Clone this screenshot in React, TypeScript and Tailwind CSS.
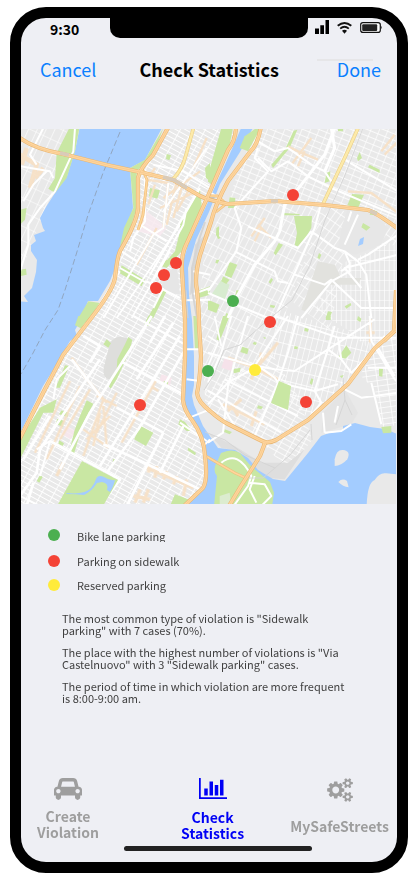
import React from "react";

type Dot = { x: number; y: number; color: string };

const GREEN = "#4caf50";
const RED = "#f44336";
const YELLOW = "#ffeb3b";

const dots: Dot[] = [
  { x: 293, y: 195, color: RED },
  { x: 176, y: 263, color: RED },
  { x: 164, y: 275, color: RED },
  { x: 156, y: 288, color: RED },
  { x: 233, y: 301, color: GREEN },
  { x: 270, y: 322, color: RED },
  { x: 208, y: 371, color: GREEN },
  { x: 255, y: 370, color: YELLOW },
  { x: 306, y: 402, color: RED },
  { x: 140, y: 405, color: RED },
];

const highways = [
  "M15 134C28 146 45 151 63 154L107 165L140 172L173 180L200 196Q208 200 228 204L275 201L325 205L368 210Q375 212 397 228",
  "M169 126L153 155Q140 168 138 178L138 208Q137 222 120 251Q117 258 115 278Q113 290 92 317L63 355L43 393L17 444",
  "M236 126Q236 140 228 150L208 196L186 245Q181 255 182 271L185 320V356L183 400Q184 410 192 420Q204 436 205 456Q208 480 203 488L184 506",
  "M261 126Q258 145 250 152L228 181Q215 205 211 222L200 255Q194 278 197 290Q199 310 199 325L201 356Q200 380 197 393Q198 402 210 411Q220 420 228 424L262 441Q268 444 276 440L308 420L348 384L375 348L397 329",
  "M396 290L394 331L384 341",
  "M265 443L260 456L241 486L229 506",
];

const ramps = [
  "M142 168L147 180L143 215L138 230",
  "M204 455L235 473L248 479",
  "M208 196L218 196L226 204L216 212",
];

function Tile({ x, y, children }: { x: number; y: number; children: React.ReactNode }) {
  return <g transform={`translate(${x} ${y}) scale(0.33333)`}>{children}</g>;
}

function StreetGrid({ id, w, h, angle, stroke }: { id: string; w: number; h: number; angle: number; stroke: number }) {
  return (
    <pattern id={id} width={w} height={h} patternUnits="userSpaceOnUse" patternTransform={`rotate(${angle})`}>
      <path d={`M0 0H${w}M0 0V${h}`} stroke="#fff" strokeWidth={stroke} fill="none" />
    </pattern>
  );
}

function CityMap() {
  return (
    <svg
      viewBox="21 129 375 375"
      preserveAspectRatio="xMidYMid slice"
      className="block aspect-square w-full"
      role="img"
      aria-label="Map of reported violations"
    >
      <defs>
        <StreetGrid id="manhattan" w={11} h={4.6} angle={29} stroke={1.7} />
        <StreetGrid id="jersey" w={8} h={13} angle={25} stroke={1.2} />
        <StreetGrid id="bronxWest" w={6} h={11} angle={27} stroke={1.3} />
        <StreetGrid id="bronxEast" w={5.5} h={12} angle={14} stroke={1.3} />
        <StreetGrid id="bronxSide" w={6} h={10} angle={35} stroke={1.3} />
        <StreetGrid id="bronxTop" w={8} h={6} angle={22} stroke={1.3} />
        <StreetGrid id="bronxFar" w={4.8} h={10} angle={0} stroke={1.2} />
        <StreetGrid id="south" w={10} h={5} angle={29} stroke={1.5} />
        <StreetGrid id="point" w={10} h={5.5} angle={-8} stroke={1.5} />
      </defs>

      <rect x="15" y="120" width="390" height="390" fill="#e9e9e9" />

      {/* street grids */}
      <path d="M15 120H82L55 190L35 235L15 290Z" fill="url(#jersey)" />
      <path d="M170 126L236 126L226 160L206 200L184 245L182 271L185 350L183 405L205 440L205 486L187 506H15V440L63 358L110 290L120 251L138 208V172Z" fill="url(#manhattan)" />
      <path d="M262 120H397V225L368 210L325 205L228 203L240 165Z" fill="url(#bronxTop)" />
      <path d="M228 204L325 205L312 240L290 300L270 360L205 400L200 300L205 240Z" fill="url(#bronxWest)" />
      <path d="M325 205L397 228V245L345 250L330 330L290 300L312 240Z" fill="url(#bronxSide)" />
      <path d="M345 262L397 240V330L370 350L348 330L315 310Z" fill="url(#bronxFar)" />
      <path d="M280 310L345 330L375 345L350 380L308 418L290 400L270 350Z" fill="url(#bronxEast)" />
      <path d="M205 392L270 350L300 400L312 440L288 470L265 446L205 410Z" fill="url(#south)" />
      <path d="M372 355L397 332V425L383 427L375 390L360 375Z" fill="url(#point)" />

      {/* areas with their own tint */}
      <Tile x={20} y={128}>
        <path d="M370 240L440 300L420 325L350 310Z" fill="#f7e9ee" opacity=".85" />
        <path d="M425 470L470 400L480 500L430 490Z" fill="#e6e6e6" />
        <path d="M525 350L555 320L520 500H508Z" fill="#dadada" />
      </Tile>
      <Tile x={20} y={316}>
        <path d="M270 80Q290 50 330 70L295 150L275 190Q240 190 255 140Z" fill="#dededc" />
        <path d="M425 175L455 185L450 210L415 200Z" fill="#f7e6ec" />
        <path d="M135 330L170 345L150 370L125 355Z" fill="#f7e6ec" opacity=".8" />
      </Tile>
      <Tile x={208} y={128}>
        <path d="M400 300L420 240L500 260L540 300L520 350L440 380L390 360Z" fill="#e7e7e7" />
        <path d="M330 400L380 410L400 450L460 450L450 470H360L290 550L280 545Z" fill="#e2e2de" />
        <path d="M40 455L65 470L50 515L10 500Z" fill="#d8ecd0" />
        <path d="M390 0H405V10H390Z" fill="#c9e7a3" />
      </Tile>
      <Tile x={208} y={316}>
        <path d="M50 125L75 135L70 165L40 155Z" fill="#f6e2ea" />
        <path d="M345 290L410 220L450 290L430 325L340 350Z" fill="#e4e4e4" />
        <path d="M0 350L80 390L160 440L240 440L290 400L230 490L170 485L90 405L40 395Z" fill="#dedede" />
      </Tile>

      {/* water */}
      <g fill="#a3ccff">
        <path d="M80 126L75 151L67 176L55 193L46 207L40 218L43 228L45 231L34 235L36 241L31 245L31 251L37 260L36 272L32 288L24 296L28 302L15 301V444L43 386L50 375L63 353L70 341L77 336L75 330L82 318L88 301L98 301L110 281L118 261L123 241L133 208L130 168L145 160L163 126Z" />
        <path d="M242 126H254L240 152L220 184L209 212L196 240L188 268L189 295L192 320L194 356L194 385L192 396L194 405L203 426L218 448L235 450L248 458L258 470L273 479L285 481L308 453L321 436L329 433L343 431V426L355 423L370 427L385 429L397 434V506H187L204 487L206 455L197 430L184 406L187 320L183 262L188 245L208 202L228 158Z" />
        <path d="M364 237L363 244L358 246L360 239Z" />
      </g>
      <path d="M221 453Q232 448 240 453L249 464L258 472L270 482L274 493L272 506H214L217 476Q212 470 217 462Z" fill="#c9e7a3" />
      <Tile x={208} y={316}>
        <g fill="#e9e9e9">
          <path d="M380 430Q385 400 405 402Q430 405 418 430Q400 450 380 450Z" />
          <path d="M391 498Q403 485 417 495L422 514Q405 512 391 498Z" />
          <path d="M476 570Q478 500 500 492Q515 468 535 472L570 475V570Z" />
        </g>
        <path d="M35 540L65 530L70 570H35Z" fill="#dceccf" />
      </Tile>

      {/* parks */}
      <g fill="#c9e7a3">
        <Tile x={20} y={128}>
          <path d="M148 0H178L165 70L140 150L105 195L85 182L105 150L110 75Z" />
          <path d="M430 0L400 80L350 130V240L325 320L300 355L312 300L340 240L330 120L375 95Z" />
          <path d="M390 180L420 187L412 212L387 205ZM440 78L453 82L448 97L438 93Z" />
          <path d="M540 185L545 230L515 330L485 375L480 330V280L510 235Z" />
          <path d="M480 310L485 370L440 420L425 415L465 370Z" />
          <path d="M437 395L448 400L440 413L431 408ZM305 412L375 455L365 475L298 435Z" />
          <path d="M430 485L440 490L400 570H383Z" />
          <path d="M205 520L240 525L210 570H175ZM0 245L20 240L15 275L0 290ZM0 425L18 422L20 440L0 445Z" />
          <path d="M555 120L570 105V160L558 150ZM530 490L570 475V500L535 510Z" />
        </Tile>
        <Tile x={208} y={128}>
          <path d="M40 0H75L65 50L10 170L0 160V140Z" />
          <path d="M145 0L158 0L120 70L95 60L110 25Z" />
          <path d="M257 8L268 5L245 60L195 120L190 110L232 62Z" />
          <path d="M355 135L367 130L365 160L350 165Z" />
          <path d="M455 72L462 90L450 100L447 90ZM485 110L515 125V135L480 118Z" />
          <path d="M432 198L468 200L450 240L418 232Z" />
          <path d="M258 264H312L310 300L290 335L272 356L260 352L267 315Z" />
          <path d="M228 255L275 258V262H228ZM465 285L487 298L475 308L460 298Z" />
          <path d="M25 300L33 295V325L38 330L30 333L24 320ZM212 345L225 350L203 382L197 375ZM333 375L340 380L335 393L328 390Z" />
          <path d="M65 402L88 410L70 450L50 442ZM45 445L65 455L55 468L40 460ZM25 395L35 395L28 407L22 404ZM85 487L95 487L93 500L82 500Z" />
          <path d="M190 450L195 455L187 468L182 462ZM187 530L202 533L198 540L186 538ZM0 515L35 530L25 555L0 545ZM360 550L372 552L365 570H353ZM410 535L428 525L430 532L415 542ZM55 555L68 560L65 570H50Z" />
          <path d="M65 208L82 210L80 240L60 240ZM490 245L508 250L505 262L485 260Z" />
        </Tile>
        <Tile x={20} y={316}>
          <path d="M175 0H215L185 38L165 28ZM385 0H398L385 30L373 25Z" />
          <path d="M325 63L337 72L325 115L290 190L272 218L267 212L290 160L292 130L315 85Z" />
          <path d="M260 70L273 82L265 95L250 85Z" />
          <path d="M200 253L220 263L190 320L162 413L148 408L163 345L180 300Z" />
          <path d="M362 330L400 350L378 390L342 370Z" />
          <path d="M280 428L288 432L285 440L278 438ZM60 477L68 483L58 500L50 495ZM118 373L132 382L128 390L115 384ZM125 283L145 290L143 303L117 295ZM112 308L133 315L128 332L107 324ZM135 148L148 150L120 215L107 215Z" />
          <path d="M465 535L510 552L490 570H450ZM480 310L495 318L515 345L500 345L475 325Z" />
          <path d="M432 195L445 198L442 208L430 205ZM0 370L60 275L110 250L100 290L70 290L0 430Z" />
          <path d="M520 0H530L535 100H525ZM505 395L528 410L525 418L503 403Z" />
        </Tile>
        <Tile x={208} y={316}>
          <path d="M45 0H65L35 75L25 70Z" />
          <path d="M103 92L122 98L118 115L97 108ZM290 35L302 38L300 47L289 45ZM260 90L270 92L268 100L258 98ZM138 77L147 80L143 87L134 84ZM165 62L174 65L171 70ZM75 160L98 155L95 168L78 172Z" />
          <path d="M415 88L430 110L412 128L392 122ZM310 187L316 190L312 207L305 202ZM395 180L407 177L402 187ZM513 155L525 158L523 182L513 180ZM520 333L550 330V350L525 352ZM355 0H368V12H353ZM150 268L165 272L160 280L147 277ZM50 340L72 348L65 355L48 348ZM450 0L460 8L457 18L447 12Z" />
        </Tile>
      </g>

      {/* commercial streets */}
      <g fill="none" stroke="#f8e0c4" strokeWidth="7" opacity=".9">
        <Tile x={20} y={128}>
          <path d="M0 80L50 110L30 180M20 60L5 110M70 120L45 150" strokeWidth="14" />
          <path d="M385 150L405 120M380 155L445 165M405 170L385 230M445 165L430 300M470 160L440 290M490 160L460 270M510 180L470 250M420 240L520 195M430 210L540 130M520 120L560 30M350 410L410 300M360 240L370 300" />
        </Tile>
        <Tile x={208} y={128}>
          <path d="M240 55L270 70L330 95M250 110L310 30M270 115L290 70M520 70L560 20M530 80L570 40M420 190L490 195L570 255M150 290L190 330M130 325L170 270M140 340L160 300" />
        </Tile>
        <Tile x={20} y={316}>
          <path d="M155 125L200 190L260 260M180 210L80 430M150 195L45 410M210 220L120 370M250 250L190 420M290 230L230 350M230 240L290 270M190 340L265 395M250 270L260 390M240 290L220 390M270 300L200 370" />
          <path d="M410 190L305 380M400 215L415 225" />
          <path d="M130 440L110 480M380 455L520 515M390 445L385 470M410 450L405 485M440 465L430 490M470 480L460 505M500 490L490 540M360 520L345 560M385 520L370 560M340 540L390 550" strokeWidth="10" />
        </Tile>
        <Tile x={208} y={316}>
          <path d="M60 125L140 155L210 190M150 150L210 80M160 110L150 160M130 190L150 140M45 265L170 325M60 285L100 250M90 300L70 265M130 330L145 285M487 10V80M475 50H500" strokeWidth="9" />
        </Tile>
      </g>

      {/* main streets */}
      <g fill="none" stroke="#fff" strokeWidth="6" strokeLinejoin="round">
        <Tile x={20} y={128}>
          <path d="M165 0L160 70L105 190L60 240L25 290V350L0 430M70 0L30 80L50 110M0 115L90 130L100 150M80 130L40 170L10 220" />
          <path d="M375 150V280L340 330L330 370M445 165L430 300L400 320L250 570M400 110L490 130L570 180M540 180L390 440M500 240L490 290L390 470M560 60L430 250M360 290L440 340M305 370L350 400M380 460L480 510M300 420L380 465" />
          <path d="M290 570L480 290M335 570L450 370M300 430L220 560" strokeWidth="5" />
          <path d="M495 517L570 515M430 480L400 540M515 500L570 480M520 430L570 440" />
        </Tile>
        <Tile x={208} y={128}>
          <path d="M380 0L350 80L280 170M280 170L230 230L215 310L200 340L140 410L90 500L60 570M370 0L380 60L350 130" strokeWidth="9" />
          <path d="M150 40L200 70L240 60L310 110L350 130L370 160M410 95L570 190M150 90L190 130L240 100L300 145M0 190L45 215M300 145L370 180L570 265M150 60L140 90L180 130L80 240L100 300L85 370L0 490" />
          <path d="M80 370L200 430L210 460L240 465M120 295L200 330L270 360L310 310M340 225L320 300L200 570M310 310L380 360L410 370L425 405V430L370 460L280 570M410 370L450 400L475 440L490 570M425 410L400 430M0 495L60 520L180 570M450 260L410 350M450 395L480 380L570 320M260 440L350 470L370 455L460 540H570M430 250L420 280M460 480L410 420L570 380" />
        </Tile>
        <Tile x={20} y={316}>
          <path d="M395 0L210 290L120 460M480 60L240 450M435 0L390 80M240 130L60 400L50 470L0 540M190 60L240 90L210 140M155 130L240 240M490 110L355 340L260 470M310 140L490 235M90 375L190 430M290 275L430 350M250 385L330 420L540 520M190 430L300 490L240 570M430 350L320 570M490 330L420 470M40 500L20 570M460 20L350 190M200 20L130 120M10 430L90 300" strokeWidth="8" />
          <path d="M500 100H540M500 190L540 195M495 310L570 280M550 390L570 370M480 320L560 375M340 0L495 85M150 150L110 190L100 250M50 400L90 375L60 480M0 540L60 570" />
        </Tile>
        <Tile x={208} y={316}>
          <path d="M0 110L120 145L200 160L260 165L360 100L500 10M70 0L40 110L0 200M120 0L100 70L60 210L45 350L0 380M0 265L60 200L150 150M150 150L200 185L210 200L320 225L390 205M270 0L240 110L210 200L140 360M140 150L240 0M360 100L400 130L430 170L480 120L530 60M320 225L360 100L380 30M200 0L390 65H570M390 65L400 130M485 0L490 75L560 190L570 200M480 155H570M410 220L460 245L570 230M490 200L520 325M510 95L560 180M320 225L340 260L300 310M0 225L220 350M50 190L270 300M30 250L80 330M345 290L350 350M350 350L400 345L430 325M390 270L380 320" />
          <path d="M40 440Q90 400 130 480L120 510L80 566M125 500L170 505L190 540L160 570M140 480L125 520L145 560" />
          <path d="M0 60L30 80L0 150M20 0L40 90" strokeWidth="5" />
        </Tile>
      </g>

      {/* large parks, not crossed by streets */}
      <path d="M82 461L118 480L103 506H57ZM279 381L291 386L288 410L271 403Z" fill="#c9e7a3" />
      <path d="M66 493Q85 495 91 488Q95 483 96 479Q98 474 104 477Q110 481 115 480Q113 488 110 492L107 490Q109 483 102 482L97 483Q92 491 84 495Q76 494 67 494Z" fill="#a3ccff" />

      {/* railways and ferry route */}
      <g fill="none" stroke="#d4d4d4" strokeWidth=".9">
        <path d="M363 128L345 175L325 220L310 265L292 300L262 325L240 345L224 350L214 375L204 390" />
        <path d="M310 430L290 455L275 468L263 478L248 478M275 468L245 455L225 440L205 432M311 424L312 440M343 378L345 400L336 425M345 400L352 415" />
        <path d="M205 222L199 240L192 268V290L197 318M209 224L202 245L195 268" strokeWidth="2" />
        <path d="M40 400L21 435M186 290L188 318" />
      </g>
      <path d="M120 132L103 173L88 215L76 255L65 290L58 310L45 330L32 355L21 374" fill="none" stroke="#8fa1b9" strokeWidth=".9" strokeDasharray="6 3" />

      {/* secondary roads */}
      <g fill="none">
        <path d="M194 126L186 155Q182 170 173 179M359 126L346 155L323 204" stroke="#e9cf88" strokeWidth="3.6" />
        <path d="M194 126L186 155Q182 170 173 179M359 126L346 155L323 204" stroke="#fdeaa9" strokeWidth="2.4" />
      </g>

      {/* highways */}
      <g fill="none" strokeLinejoin="round">
        {ramps.map((d) => (
          <path key={d} d={d} stroke="#efbf7c" strokeWidth="2.8" />
        ))}
        {ramps.map((d) => (
          <path key={d + "fill"} d={d} stroke="#ffd69b" strokeWidth="1.5" />
        ))}
        {highways.map((d) => (
          <path key={d} d={d} stroke="#e8b673" strokeWidth="4.2" />
        ))}
        {highways.map((d) => (
          <path key={d + "fill"} d={d} stroke="#ffd59d" strokeWidth="3" />
        ))}
        {highways.map((d) => (
          <path key={d + "line"} d={d} stroke="#f3c689" strokeWidth=".6" />
        ))}
        <path d="M60 153L69 155M163 177L174 180L187 188M271 201H278M370 211L377 214" stroke="#d9cbb9" strokeWidth="3.6" />
      </g>

      {dots.map((d) => (
        <circle key={`${d.x}-${d.y}`} cx={d.x} cy={d.y} r="6" fill={d.color} />
      ))}
    </svg>
  );
}

function StatusIcons() {
  return (
    <div className="flex gap-2 pt-0.5">
      <svg width="14" height="14" viewBox="0 0 14 14" aria-hidden="true">
        <path d="M0 8.5H4V14H0ZM5.3 5.3H9V14H5.3ZM10.5 0H14V14H10.5Z" fill="#000" />
      </svg>
      <svg width="15" height="14" viewBox="0 0 15 14" fill="none" stroke="#111" aria-hidden="true">
        <path d="M0.7 5.8Q7.5 0.2 14.3 5.8" strokeWidth="1.9" />
        <path d="M3.2 8.6Q7.5 5 11.8 8.6" strokeWidth="1.8" />
        <path d="M5 10.7Q7.5 9 10 10.7L7.5 13.8Z" fill="#111" stroke="none" />
      </svg>
      <svg width="22" height="14" viewBox="0 0 22 14" aria-hidden="true">
        <rect x="0.7" y="2.6" width="19.6" height="9.8" rx="2.2" fill="#fff" stroke="#111" strokeWidth="1.2" />
        <rect x="2.2" y="4.2" width="15" height="6.8" rx="1" fill="#222" />
        <path d="M20.8 5.5Q22.4 7.4 20.8 9.4Z" fill="#111" />
      </svg>
    </div>
  );
}

const legend = [
  { label: "Bike lane parking", dot: "bg-[#4caf50]", row: "h-[26px]", text: "mt-px h-[13px] overflow-hidden" },
  { label: "Parking on sidewalk", dot: "bg-[#f44336]", row: "h-[26px]", text: "" },
  { label: "Reserved parking", dot: "bg-[#ffeb3b]", row: "h-[22px]", text: "" },
];

const CAR =
  "M480 960q0-66-47-113t-113-47-113 47-47 113 47 113 113 47 113-47 47-113zm36-320h1016l-89-357q-2-8-14-17.5t-21-9.5h-768q-9 0-21 9.5t-14 17.5zm1372 320q0-66-47-113t-113-47-113 47-47 113 47 113 113 47 113-47 47-113zm160-96v384q0 14-9 23t-23 9h-96v128q0 80-56 136t-136 56-136-56-56-136v-128h-1024v128q0 80-56 136t-136 56-136-56-56-136v-128h-96q-14 0-23-9t-9-23v-384q0-93 65.5-158.5t158.5-65.5h28l105-419q23-94 104-157.5t179-63.5h768q98 0 179 63.5t104 157.5l105 419h28q93 0 158.5 65.5t65.5 158.5z";
const CHART =
  "M640 768v512h-256v-512h256zm384-512v1024h-256v-1024h256zm1024 1152v128h-2048v-1536h128v1408h1920zm-640-896v768h-256v-768h256zm384-384v1152h-256v-1152h256z";
const COGS =
  "M896 896q0-106-75-181t-181-75-181 75-75 181 75 181 181 75 181-75 75-181zm768 512q0-52-38-90t-90-38-90 38-38 90q0 53 37.5 90.5t90.5 37.5 90.5-37.5 37.5-90.5zm0-1024q0-52-38-90t-90-38-90 38-38 90q0 53 37.5 90.5t90.5 37.5 90.5-37.5 37.5-90.5zm-384 421v185q0 10-7 19.5t-16 10.5l-155 24q-11 35-32 76 34 48 90 115 7 11 7 20 0 12-7 19-23 30-82.5 89.5t-78.5 59.5q-11 0-21-7l-115-90q-37 19-77 31-11 108-23 155-7 24-30 24h-186q-11 0-20-7.5t-10-17.5l-23-153q-34-10-75-31l-118 89q-7 7-20 7-11 0-21-8-144-133-144-160 0-9 7-19 10-14 41-53t47-61q-23-44-35-82l-152-24q-10-1-17-9.5t-7-19.5v-185q0-10 7-19.5t16-10.5l155-24q11-35 32-76-34-48-90-115-7-11-7-20 0-12 7-20 22-30 82-89t79-59q11 0 21 7l115 90q34-18 77-32 11-108 23-154 7-24 30-24h186q11 0 20 7.5t10 17.5l23 153q34 10 75 31l118-89q8-7 20-7 11 0 21 8 144 133 144 160 0 8-7 19-12 16-42 54t-45 60q23 48 34 82l152 23q10 2 17 10.5t7 19.5zm640 533v140q0 16-149 31-12 27-30 52 51 113 51 138 0 4-4 7-122 71-124 71-8 0-46-47t-52-68q-20 2-30 2t-30-2q-14 21-52 68t-46 47q-2 0-124-71-4-3-4-7 0-25 51-138-18-25-30-52-149-15-149-31v-140q0-16 149-31 13-29 30-52-51-113-51-138 0-4 4-7 4-2 35-20t59-34 30-16q8 0 46 46.5t52 67.5q20-2 30-2t30 2q51-71 92-112l6-2q4 0 124 70 4 3 4 7 0 25-51 138 17 23 30 52 149 15 149 31zm0-1024v140q0 16-149 31-12 27-30 52 51 113 51 138 0 4-4 7-122 71-124 71-8 0-46-47t-52-68q-20 2-30 2t-30-2q-14 21-52 68t-46 47q-2 0-124-71-4-3-4-7 0-25 51-138-18-25-30-52-149-15-149-31v-140q0-16 149-31 13-29 30-52-51-113-51-138 0-4 4-7 4-2 35-20t59-34 30-16q8 0 46 46.5t52 67.5q20-2 30-2t30 2q51-71 92-112l6-2q4 0 124 70 4 3 4 7 0 25-51 138 17 23 30 52 149 15 149 31z";

export default function App() {
  return (
    <div className="bg-white pt-[7px] pr-[11px] pb-3.5 pl-2.5 font-['Noto_Sans_CJK_SC','Noto_Sans',sans-serif]">
      <div className="relative flex min-h-[866px] flex-col overflow-hidden rounded-[36px] border-[11px] border-black bg-[#eeeff4]">
        <div className="absolute inset-x-0 top-0 mx-auto h-5 w-[198px] rounded-b-[10px] bg-black" />

        <div className="flex h-[27px] justify-between pr-[15px] pl-[29px]">
          <span className="text-[14px] leading-[22px] font-bold">9:30</span>
          <StatusIcons />
        </div>

        <header className="flex h-[84px] items-start gap-[43px] pt-2.5 pr-4 pl-[19px]">
          <button className="text-[18px] leading-7 text-[#0a7fff]">Cancel</button>
          <h1 className="flex-1 text-[18px] leading-7 font-bold whitespace-nowrap">Check Statistics</h1>
          <button className="relative text-[18px] leading-7 text-[#0a7fff]">
            <span className="absolute top-1 right-2 h-0.5 w-14 bg-[#e6e6e8]" />
            Done
          </button>
        </header>

        <div className="pr-px">
          <CityMap />
        </div>

        <ul className="pt-[18px] pl-[27px] text-[11px] leading-[14px] text-[#404040]">
          {legend.map((item) => (
            <li key={item.label} className={`flex items-center gap-[17px] ${item.row}`}>
              <span className={`size-3 rounded-full ${item.dot}`} />
              <span className={item.text}>{item.label}</span>
            </li>
          ))}
        </ul>

        <section className="flex flex-col gap-2.5 pt-4 pr-12 pl-[41px] text-[11px] leading-3 text-[#404040]">
          <p>The most common type of violation is "Sidewalk parking" with 7 cases (70%).</p>
          <p>The place with the highest number of violations is "Via Castelnuovo" with 3 "Sidewalk parking" cases.</p>
          <p>The period of time in which violation are more frequent is 8:00-9:00 am.</p>
        </section>

        <nav className="mt-auto flex items-start pr-2 pl-4 text-[14px] leading-4 font-bold text-[#9e9e9e]">
          <button className="flex flex-col items-center gap-1.5">
            <svg width="28" height="24" viewBox="0 0 2048 1755" fill="currentColor" aria-hidden="true">
              <path d={CAR} />
            </svg>
            <span>
              Create
              <br />
              Violation
            </span>
          </button>
          <div className="flex flex-1 justify-center pl-9">
            <button className="flex flex-col items-center gap-[7px] text-[#0000f5]">
              <svg width="28" height="24" viewBox="0 0 2048 1755" fill="currentColor" aria-hidden="true">
                <path d={CHART} />
              </svg>
              <span>
                Check
                <br />
                Statistics
              </span>
            </button>
          </div>
          <button className="flex flex-col items-center gap-4">
            <svg width="26" height="24" viewBox="0 0 1920 1792" fill="currentColor" aria-hidden="true">
              <path d={COGS} />
            </svg>
            <span>MySafeStreets</span>
          </button>
        </nav>
        <div className="pt-[5px] pb-[11px] pl-[18px]">
          <div className="mx-auto h-[5px] w-[188px] rounded-full bg-[#222]" />
        </div>
      </div>
    </div>
  );
}
